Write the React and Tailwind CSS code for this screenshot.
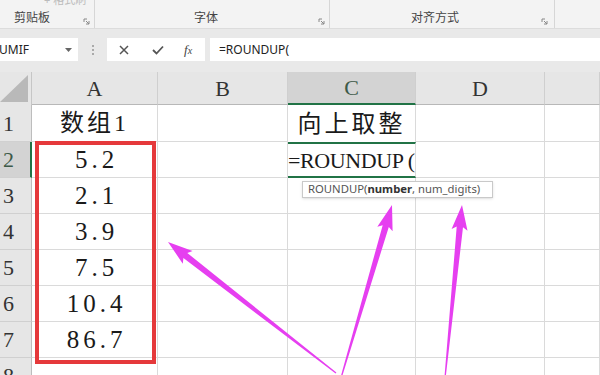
import React from "react";

const cols = [
  { key: "A", w: "w-[126px]" },
  { key: "B", w: "w-[130px]" },
  { key: "C", w: "w-[128px]" },
  { key: "D", w: "w-[129px]" },
  { key: "E", w: "flex-1" },
];

const rows = [
  { n: 1, h: "h-[37px]", cells: { A: "数组1", C: "向上取整" } },
  { n: 2, h: "h-[36px]", cells: { A: "5.2" } },
  { n: 3, h: "h-[36px]", cells: { A: "2.1" } },
  { n: 4, h: "h-[36px]", cells: { A: "3.9" } },
  { n: 5, h: "h-[36px]", cells: { A: "7.5" } },
  { n: 6, h: "h-[36px]", cells: { A: "10.4" } },
  { n: 7, h: "h-[36px]", cells: { A: "86.7" } },
  { n: 8, h: "h-[36px]", cells: {} },
];

// tapered arrow, thin at the tail and wide near the head
function arrowPoints(tail, tip) {
  const dx = tip[0] - tail[0];
  const dy = tip[1] - tail[1];
  const len = Math.hypot(dx, dy);
  const ux = dx / len;
  const uy = dy / len;
  const nx = -uy;
  const ny = ux;
  const head = 22;
  const neck = [tip[0] - ux * head, tip[1] - uy * head];
  const barb = [neck[0] - ux * 3, neck[1] - uy * 3];
  const p = (b, s) => `${(b[0] + nx * s).toFixed(1)},${(b[1] + ny * s).toFixed(1)}`;
  return [p(tail, 0.6), p(neck, 3.2), p(barb, 8), `${tip[0]},${tip[1]}`, p(barb, -8), p(neck, -3.2), p(tail, -0.6)].join(" ");
}

function Launcher() {
  return (
    <svg width="7" height="7" viewBox="0 0 7 7" className="text-[#888]">
      <path d="M1 1h3M1 1v3M3 3l3 3M6 3v3H3" stroke="currentColor" strokeWidth="1" fill="none" />
    </svg>
  );
}

export default function App() {
  return (
    <div className="relative w-[600px] h-[375px] overflow-hidden bg-white font-['Noto_Sans','Noto_Sans_CJK_SC',sans-serif]">
      {/* ribbon */}
      <div className="flex h-[28px] bg-[#f3f3f3] text-[12px] text-[#444]">
        <div className="relative flex w-[95px] items-end pl-[14px] border-r border-[#d6d6d6]">
          <span className="absolute -top-[8px] left-[44px] text-[11px] text-[#bbb]">+ 格式刷</span>
          <span className="leading-[16px] mb-[2px]">剪贴板</span>
          <span className="ml-auto mb-[3px] mr-[4px]"><Launcher /></span>
        </div>
        <div className="flex w-[235px] items-end border-r border-[#d6d6d6]">
          <span className="ml-[99px] leading-[16px] mb-[2px]">字体</span>
          <span className="ml-auto mb-[3px] mr-[4px]"><Launcher /></span>
        </div>
        <div className="flex w-[225px] items-end border-r border-[#d6d6d6]">
          <span className="ml-[81px] leading-[16px] mb-[2px]">对齐方式</span>
          <span className="ml-auto mb-[3px] mr-[6px]"><Launcher /></span>
        </div>
        <div className="flex-1" />
      </div>

      {/* formula bar */}
      <div className="h-[44px] bg-[#e9e9e9] pt-[9px] border-t border-[#dcdcdc]">
        <div className="flex h-[23px] items-stretch">
          <div className="flex w-[78px] items-center bg-white pr-[6px] text-[12px] text-[#222]">
            <span className="-ml-[1px]">UMIF</span>
            <svg width="7" height="4" viewBox="0 0 7 4" className="ml-auto">
              <path d="M0 0h7L3.5 4z" fill="#666" />
            </svg>
          </div>
          <div className="flex w-[29px] flex-col items-center justify-center gap-[2px]">
            <span className="h-[2px] w-[2px] bg-[#aaa]" />
            <span className="h-[2px] w-[2px] bg-[#aaa]" />
            <span className="h-[2px] w-[2px] bg-[#aaa]" />
          </div>
          <div className="flex w-[98px] items-center bg-white text-[#555]">
            <svg width="10" height="10" viewBox="0 0 10 10" className="ml-[12px]">
              <path d="M1 1l8 8M9 1L1 9" stroke="#555" strokeWidth="1.5" />
            </svg>
            <svg width="12" height="10" viewBox="0 0 12 10" className="ml-[23px]">
              <path d="M1 5l3.5 3.5L11 1.5" stroke="#555" strokeWidth="1.8" fill="none" />
            </svg>
            <span className="ml-[20px] font-['Liberation_Serif',serif] italic text-[13px] text-[#444]">
              f<span className="text-[10px]">x</span>
            </span>
          </div>
          <div className="ml-[5px] flex flex-1 items-center bg-white pl-[9px] text-[12px] text-[#222]">=ROUNDUP(</div>
        </div>
      </div>

      {/* sheet */}
      <div className="font-['Liberation_Serif','Noto_Sans_CJK_SC',serif]">
        <div className="flex h-[33px] bg-[#e6e6e6] text-[22px] text-[#333]">
          <div className="relative w-[32px] border-r border-[#c6c6c6]">
            <svg width="28" height="27" viewBox="0 0 28 27" className="absolute right-[3px] bottom-[3px]">
              <path d="M28 0V27H0z" fill="#b9b9b9" />
            </svg>
          </div>
          {cols.map((c) => (
            <div
              key={c.key}
              className={`${c.w} flex items-center justify-center border-r border-[#cfcfcf] ${
                c.key === "C" ? "bg-[#d3d3d3] border-b-2 border-b-[#217346] text-[#3d5a48]" : "border-b border-b-[#b8b8b8]"
              }`}
            >
              {c.key !== "E" && c.key}
            </div>
          ))}
        </div>

        {rows.map((r) => (
          <div key={r.n} className={`flex ${r.h}`}>
            <div
              className={`w-[32px] flex items-center pl-[3px] text-[22px] border-b border-[#d0d0d0] ${
                r.n === 2 ? "bg-[#d3d3d3] border-r-2 border-r-[#217346] text-[#3d5a48]" : "bg-[#e6e6e6] border-r border-r-[#bdbdbd] text-[#333]"
              }`}
            >
              {r.n}
            </div>
            {cols.map((c) => {
              const v = r.cells[c.key];
              const active = r.n === 2 && c.key === "C";
              return (
                <div
                  key={c.key}
                  className={`${c.w} relative flex items-center justify-center border-r border-[#dadada] ${
                    active ? "border-y-2 border-y-[#217346]" : r.n === 1 && c.key === "C" ? "" : "border-b border-b-[#dadada]"
                  }`}
                >
                  {v && c.key === "A" && r.n > 1 && (
                    <span className="text-[25px] tracking-[4px] pl-[4px] text-[#1a1a1a]">{v}</span>
                  )}
                  {v && r.n === 1 && (
                    <span className="text-[24px] tracking-[3px] text-[#1a1a1a]">{v}</span>
                  )}
                  {active && (
                    <span className="absolute left-0 top-[2px] text-[22px] leading-[30px] tracking-[-0.4px] text-[#1a1a1a] whitespace-nowrap">
                      =ROUNDUP (
                    </span>
                  )}
                </div>
              );
            })}
          </div>
        ))}
      </div>

      {/* function tooltip */}
      <div className="absolute left-[302px] top-[181px] flex h-[17px] w-[191px] items-center border border-[#c9c9c9] bg-white pl-[5px] text-[11.3px] text-[#555] shadow-sm">
        ROUNDUP(<b className="font-bold text-[#333]">number</b>, num_digits)
      </div>

      {/* red selection annotation */}
      <div className="absolute left-[35px] top-[141px] h-[223px] w-[121px] border-[4px] border-[#e5393b]" />

      {/* magenta arrows */}
      <svg className="absolute left-0 top-0" width="600" height="375" viewBox="0 0 600 375">
        <polygon points={arrowPoints([336, 373], [168, 242])} fill="#e63ff0" />
        <polygon points={arrowPoints([341, 378], [392, 205])} fill="#e63ff0" />
        <polygon points={arrowPoints([445, 378], [462, 205])} fill="#e63ff0" />
      </svg>
    </div>
  );
}
